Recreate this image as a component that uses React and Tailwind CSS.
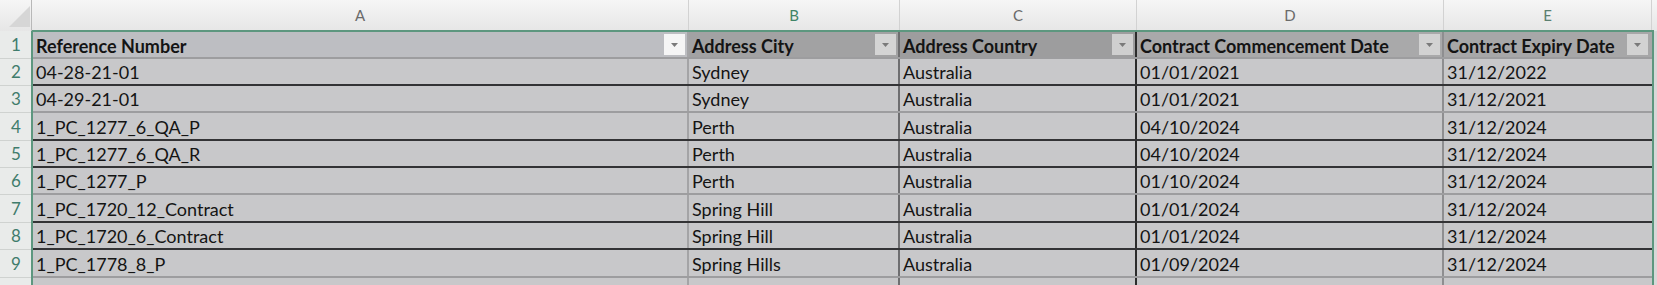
import React from "react";

const cols = [
  { key: "a", letter: "A", w: "w-[656px]", head: "bg-[#bdbec2]", drop: "bg-[#f5f5f5]", line: "border-r-[#a4a4a6]", letterColor: "text-[#6a6a6a]" },
  { key: "b", letter: "B", w: "w-[211px]", head: "bg-[#a2a2a3]", drop: "bg-[#d4d4d4]", line: "border-r-[#6e6e70]", letterColor: "text-[#3f8466]" },
  { key: "c", letter: "C", w: "w-[237px]", head: "bg-[#9d9d9e]", drop: "bg-[#cfcfcf]", line: "border-r-[#2c2c2c]", letterColor: "text-[#6a6a6a]" },
  { key: "d", letter: "D", w: "w-[307px]", head: "bg-[#a9a9aa]", drop: "bg-[#d2d2d2]", line: "border-r-[#8e8e90]", letterColor: "text-[#6a6a6a]" },
  { key: "e", letter: "E", w: "w-[208px]", head: "bg-[#a7a7a8]", drop: "bg-[#d2d2d2]", line: "border-r-transparent", letterColor: "text-[#5b7f70]" },
];

const headers = [
  "Reference Number",
  "Address City",
  "Address Country",
  "Contract Commencement Date",
  "Contract Expiry Date",
];

// h = row height, dark = bottom rule is the black one
const rows = [
  { n: 2, h: "h-[27px]", dark: true, cells: ["04-28-21-01", "Sydney", "Australia", "01/01/2021", "31/12/2022"] },
  { n: 3, h: "h-[27px]", dark: false, cells: ["04-29-21-01", "Sydney", "Australia", "01/01/2021", "31/12/2021"] },
  { n: 4, h: "h-[28px]", dark: true, cells: ["1_PC_1277_6_QA_P", "Perth", "Australia", "04/10/2024", "31/12/2024"] },
  { n: 5, h: "h-[27px]", dark: true, cells: ["1_PC_1277_6_QA_R", "Perth", "Australia", "04/10/2024", "31/12/2024"] },
  { n: 6, h: "h-[27px]", dark: false, cells: ["1_PC_1277_P", "Perth", "Australia", "01/10/2024", "31/12/2024"] },
  { n: 7, h: "h-[28px]", dark: true, cells: ["1_PC_1720_12_Contract", "Spring Hill", "Australia", "01/01/2024", "31/12/2024"] },
  { n: 8, h: "h-[27px]", dark: true, cells: ["1_PC_1720_6_Contract", "Spring Hill", "Australia", "01/01/2024", "31/12/2024"] },
  { n: 9, h: "h-[28px]", dark: false, cells: ["1_PC_1778_8_P", "Spring Hills", "Australia", "01/09/2024", "31/12/2024"] },
];

function FilterButton({ tone }) {
  return (
    <div className={`w-[21px] h-[21px] shrink-0 flex items-center justify-center ${tone}`}>
      <svg width="9" height="6" viewBox="0 0 9 6">
        <polygon points="1,1 8,1 4.5,5" fill="#7a7a7a" />
      </svg>
    </div>
  );
}

export default function App() {
  return (
    <div
      className="w-[1657px] h-[285px] overflow-hidden bg-[#c8c8ca] text-[#141414]"
      style={{ fontFamily: "Lato, 'Open Sans', sans-serif" }}
    >
      {/* column letters */}
      <div className="flex h-[31px] bg-gradient-to-b from-[#f6f6f6] to-[#e6e6e6]">
        <div className="w-[32px] shrink-0 relative border-r border-[#b8b8b8]">
          <svg className="absolute left-[9px] top-[6px]" width="21" height="21" viewBox="0 0 21 21">
            <polygon points="21,0 21,21 0,21" fill="#d6d6d6" />
          </svg>
        </div>
        {cols.map((c, i) => (
          <div
            key={c.key}
            className={`${c.w} ${i === 0 ? "w-[657px]" : ""} shrink-0 flex items-center justify-center border-r border-[#d2d2d2] text-[15px] ${c.letterColor}`}
          >
            {c.letter}
          </div>
        ))}
        <div className="flex-1" />
      </div>

      <div className="flex">
        {/* row numbers */}
        <div className="w-[32px] shrink-0 bg-[#e9ebea] text-[17px] text-[#3f7c6c]">
          <div className="h-[28px] flex items-center justify-center border-b border-[#cfd2d0]">1</div>
          {rows.map((r) => (
            <div key={r.n} className={`${r.h} flex items-center justify-center border-b border-[#cfd2d0]`}>
              {r.n}
            </div>
          ))}
          <div className="h-[27px]" />
        </div>

        {/* data block with selection border */}
        <div className="border-l-2 border-t-2 border-r-2 border-[#5d977f] -mt-[1px] -ml-[1px]">
          <div className="flex h-[27px] border-b-2 border-[#9d9d9f] text-[18px] font-bold">
            {cols.map((c, i) => (
              <div
                key={c.key}
                className={`${c.w} shrink-0 flex items-center justify-between pl-[3px] pr-[2px] border-r-2 ${c.line} ${c.head}`}
              >
                <span className="whitespace-nowrap pt-[3px]">{headers[i]}</span>
                <FilterButton tone={c.drop} />
              </div>
            ))}
          </div>
          {rows.map((r) => (
            <div
              key={r.n}
              className={`flex ${r.h} border-b-2 text-[18px] ${r.dark ? "border-[#333335]" : "border-[#9d9d9f]"}`}
            >
              {cols.map((c, i) => (
                <div
                  key={c.key}
                  className={`${c.w} shrink-0 flex items-center pl-[3px] border-r-2 ${c.line} whitespace-nowrap overflow-hidden`}
                >
                  <span className="pt-[2px]">{r.cells[i]}</span>
                </div>
              ))}
            </div>
          ))}
          {/* next row, only its top shows */}
          <div className="flex h-[27px]">
            {cols.map((c) => (
              <div key={c.key} className={`${c.w} shrink-0 border-r-2 ${c.line}`} />
            ))}
          </div>
        </div>
        <div className="flex-1 bg-[#d8d8d8]" />
      </div>
    </div>
  );
}
